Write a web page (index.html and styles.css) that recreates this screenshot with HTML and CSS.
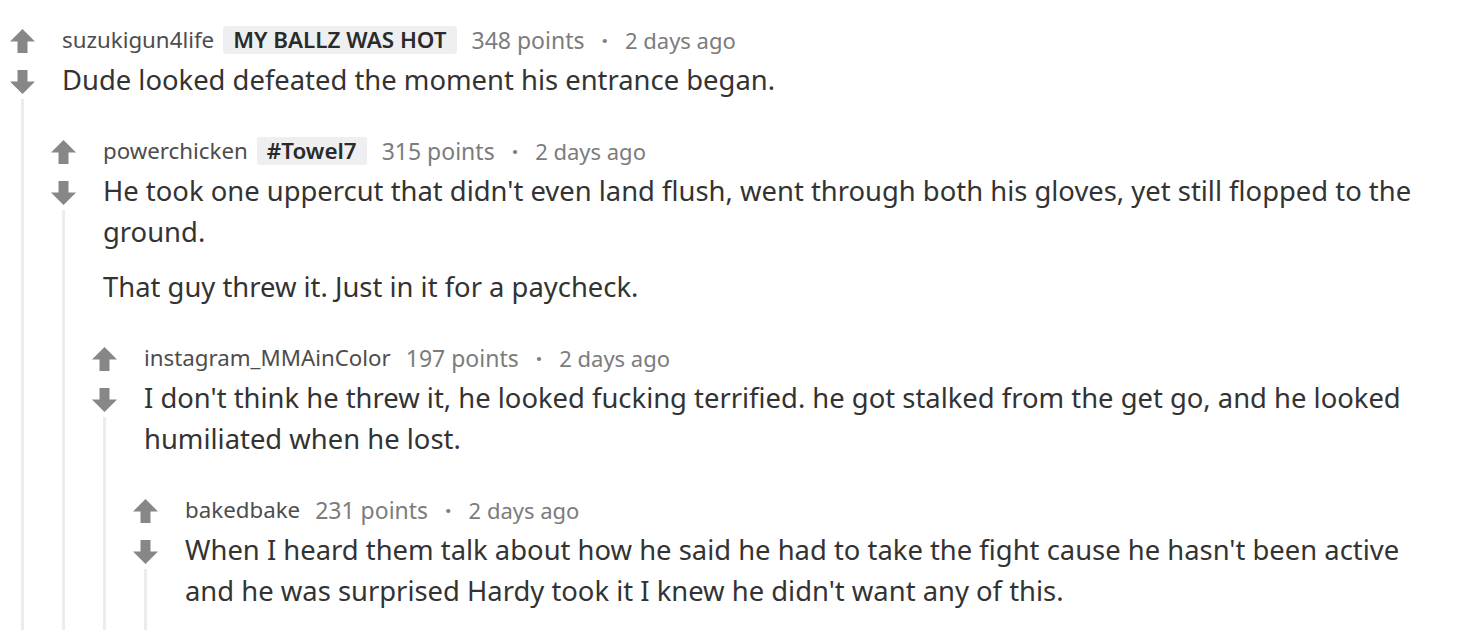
FILE: index.html
```html
<!DOCTYPE html>
<html>
<head>
<meta charset="utf-8">
<link rel="stylesheet" href="styles.css">
</head>
<body>
<svg width="0" height="0" class="defs">
  <defs>
    <path id="up" d="M12.5 0 L25 12.5 H17.5 V24 H7.5 V12.5 H0 Z"/>
    <path id="down" d="M12.5 24 L25 11.5 H17.5 V0 H7.5 V11.5 H0 Z"/>
  </defs>
</svg>
<div class="thread">
  <div class="comment first">
    <div class="rail">
      <svg class="arrow" viewBox="0 0 25 24"><use href="#up"/></svg>
      <svg class="arrow" viewBox="0 0 25 24"><use href="#down"/></svg>
      <div class="line"></div>
    </div>
    <div class="main">
      <div class="meta"><span class="user">suzukigun4life</span><span class="flair">MY BALLZ WAS HOT</span><span class="pts">348 points</span><span class="dot">·</span><span class="time">2 days ago</span></div>
      <div class="body"><p>Dude looked defeated the moment his entrance began.</p></div>
      <div class="children">
        <div class="comment">
          <div class="rail">
            <svg class="arrow" viewBox="0 0 25 24"><use href="#up"/></svg>
            <svg class="arrow" viewBox="0 0 25 24"><use href="#down"/></svg>
            <div class="line"></div>
          </div>
          <div class="main">
            <div class="meta"><span class="user">powerchicken</span><span class="flair">#Towel7</span><span class="pts">315 points</span><span class="dot">·</span><span class="time">2 days ago</span></div>
            <div class="body">
              <p>He took one uppercut that didn't even land flush, went through both his gloves, yet still flopped to the ground.</p>
              <p>That guy threw it. Just in it for a paycheck.</p>
            </div>
            <div class="children">
              <div class="comment">
                <div class="rail">
                  <svg class="arrow" viewBox="0 0 25 24"><use href="#up"/></svg>
                  <svg class="arrow" viewBox="0 0 25 24"><use href="#down"/></svg>
                  <div class="line"></div>
                </div>
                <div class="main">
                  <div class="meta"><span class="user">instagram_MMAinColor</span><span class="pts">197 points</span><span class="dot">·</span><span class="time">2 days ago</span></div>
                  <div class="body"><p>I don't think he threw it, he looked fucking terrified. he got stalked from the get go, and he looked humiliated when he lost.</p></div>
                  <div class="children">
                    <div class="comment">
                      <div class="rail">
                        <svg class="arrow" viewBox="0 0 25 24"><use href="#up"/></svg>
                        <svg class="arrow" viewBox="0 0 25 24"><use href="#down"/></svg>
                        <div class="line"></div>
                      </div>
                      <div class="main">
                        <div class="meta"><span class="user">bakedbake</span><span class="pts">231 points</span><span class="dot">·</span><span class="time">2 days ago</span></div>
                        <div class="body"><p>When I heard them talk about how he said he had to take the fight cause he hasn't been active and he was surprised Hardy took it I knew he didn't want any of this.</p></div>
                        <div class="tail"></div>
                      </div>
                    </div>
                  </div>
                </div>
              </div>
            </div>
          </div>
        </div>
      </div>
    </div>
  </div>
</div>
</body>
</html>
```
FILE: styles.css
```css
html, body {
  margin: 0;
  padding: 0;
  background: #ffffff;
  height: 630px;
  overflow: hidden;
}
body {
  font-family: "Noto Sans", "Open Sans", sans-serif;
  color: #333333;
}
.defs {
  position: absolute;
  width: 0;
  height: 0;
}
.thread {
  padding: 0 40px 0 2px;
}
.comment {
  display: grid;
  grid-template-columns: 41px 1fr;
  padding-top: 31px;
}
.comment.first {
  padding-top: 20px;
}
.rail {
  display: flex;
  flex-direction: column;
  align-items: center;
}
.arrow {
  width: 25px;
  height: 24px;
  margin: 8.5px 0;
  fill: #878787;
}
.line {
  flex: 1;
  width: 3px;
  margin-top: -3px;
  background: #ececec;
}
.meta {
  display: flex;
  align-items: center;
  height: 39px;
  padding-left: 19px;
  font-size: 23px;
  color: #7c7c7c;
  white-space: nowrap;
}
.user {
  color: #4d4d4d;
  font-size: 22.3px;
  margin-right: 9px;
}
.flair {
  background: #edeff1;
  color: #2a2a2a;
  font-weight: 600;
  font-size: 22.4px;
  line-height: 28px;
  padding: 0 10px;
  border-radius: 3px;
  margin-right: 15px;
}
.user + .pts {
  margin-left: 6px;
}
.dot {
  margin: 0 17px;
  font-weight: 700;
}
.time {
  font-size: 22px;
}
.body {
  padding-left: 19px;
  font-size: 27.4px;
  line-height: 41px;
  color: #333333;
}
.body p {
  margin: 0;
}
.body p + p {
  margin-top: 14px;
}
.tail {
  height: 60px;
}
```
